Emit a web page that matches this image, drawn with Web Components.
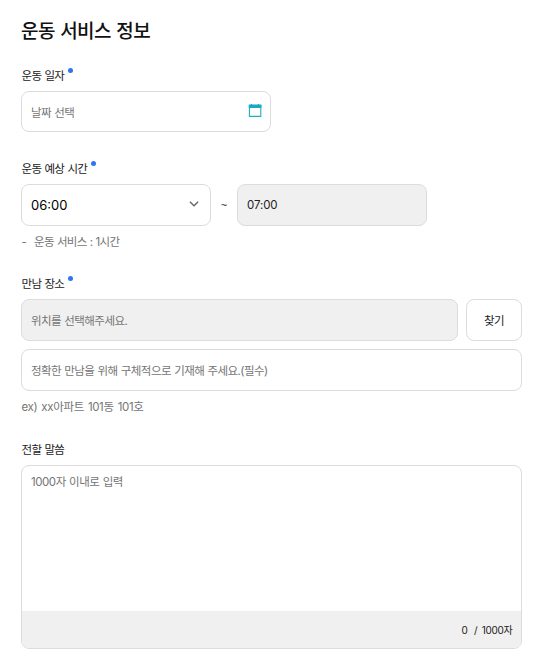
<!DOCTYPE html>
<html lang="ko">
<head>
<meta charset="utf-8">
<title>운동 서비스 정보</title>
<style>
  body {
    margin: 0;
    background: #fff;
    color: #222;
    font-family: Inter, "Noto Sans CJK KR", sans-serif;
    font-size: 11.5px;
    line-height: 18px;
    letter-spacing: -0.55px;
    word-spacing: 0.5px;
  }
</style>
</head>
<body>
<service-form>
  <form-field label="운동 일자" required style="height: 93px">
    <text-box style="width: 250px; height: 41px">날짜 선택<calendar-icon slot="icon"></calendar-icon></text-box>
  </form-field>

  <form-field label="운동 예상 시간" required style="height: 115px">
    <field-row>
      <text-box style="width: 190px; --color: #000; --size: 13px; --spacing: 0; --shift: 0">06:00<chevron-icon slot="icon"></chevron-icon></text-box>
      <range-mark>~</range-mark>
      <text-box disabled style="width: 190px; --color: #222; --spacing: -0.1px; --shift: 0">07:00</text-box>
    </field-row>
    <help-text mark="-" style="margin-top: 6px; letter-spacing: -0.65px">운동 서비스 : 1시간</help-text>
  </form-field>

  <form-field label="만남 장소" required style="height: 166px">
    <field-row style="gap: 8px">
      <text-box disabled style="flex: 1">위치를 선택해주세요.</text-box>
      <find-button>찾기</find-button>
    </field-row>
    <text-box style="margin-top: 8px">정확한 만남을 위해 구체적으로 기재해 주세요.(필수)</text-box>
    <help-text style="letter-spacing: -0.35px; word-spacing: 1.1px">ex) xx아파트 101동 101호</help-text>
  </form-field>

  <form-field label="전할 말씀">
    <message-box count="0" max="1000">1000자 이내로 입력</message-box>
  </form-field>
</service-form>

<script>
  class ServiceForm extends HTMLElement {
    constructor() {
      super();
      const shadow = this.attachShadow({mode: "open"});
      shadow.innerHTML = `
        <style>
          :host {
            display: block;
            box-sizing: border-box;
            width: 543px;
            padding: 16px 21px 0;
          }
          h1 {
            margin: 0 0 19px;
            height: 32px;
            font-size: 19px;
            line-height: 32px;
            font-weight: 500;
            letter-spacing: -0.6px;
            word-spacing: 1px;
            color: #111;
          }
        </style>
        <h1>운동 서비스 정보</h1>
        <slot></slot>
      `;
    }
  }

  class FormField extends HTMLElement {
    constructor() {
      super();
      const shadow = this.attachShadow({mode: "open"});
      shadow.innerHTML = `
        <style>
          :host {
            display: block;
          }
          .label {
            display: flex;
            gap: 4px;
            height: 24px;
            padding-left: 0.5px;
            letter-spacing: -0.65px;
          }
          .dot {
            width: 5px;
            height: 5px;
            margin-top: 1px;
            border-radius: 50%;
            background: #2f74f5;
          }
        </style>
        <div class="label">
          <span>${this.getAttribute("label")}</span>
          ${this.hasAttribute("required") ? '<i class="dot"></i>' : ""}
        </div>
        <slot></slot>
      `;
    }
  }

  class FieldRow extends HTMLElement {
    constructor() {
      super();
      const shadow = this.attachShadow({mode: "open"});
      shadow.innerHTML = `
        <style>
          :host {
            display: flex;
          }
        </style>
        <slot></slot>
      `;
    }
  }

  class TextBox extends HTMLElement {
    constructor() {
      super();
      const shadow = this.attachShadow({mode: "open"});
      shadow.innerHTML = `
        <style>
          :host {
            display: flex;
            align-items: center;
            justify-content: space-between;
            box-sizing: border-box;
            height: 42px;
            padding: 0 9px;
            border: 1px solid #dcdcdc;
            border-radius: 8px;
            background: #fff;
            color: var(--color, #757575);
            font-size: var(--size, 11.5px);
            letter-spacing: var(--spacing, -0.55px);
          }
          :host([disabled]) {
            background: #f0f0f0;
          }
          span {
            padding-top: var(--shift, 2px);
          }
        </style>
        <span><slot></slot></span>
        <slot name="icon"></slot>
      `;
    }
  }

  class RangeMark extends HTMLElement {
    constructor() {
      super();
      const shadow = this.attachShadow({mode: "open"});
      shadow.innerHTML = `
        <style>
          :host {
            width: 26px;
            font-family: "Liberation Sans", sans-serif;
            font-size: 11px;
            line-height: 43px;
            letter-spacing: 0;
            text-align: center;
          }
        </style>
        <slot></slot>
      `;
    }
  }

  class HelpText extends HTMLElement {
    constructor() {
      super();
      const shadow = this.attachShadow({mode: "open"});
      shadow.innerHTML = `
        <style>
          :host {
            display: flex;
            margin-top: 7px;
            padding-left: 0.5px;
            color: #757575;
          }
          .mark {
            width: 12.5px;
          }
        </style>
        ${this.hasAttribute("mark") ? `<span class="mark">${this.getAttribute("mark")}</span>` : ""}
        <span><slot></slot></span>
      `;
    }
  }

  class FindButton extends HTMLElement {
    constructor() {
      super();
      const shadow = this.attachShadow({mode: "open"});
      shadow.innerHTML = `
        <style>
          button {
            display: block;
            width: 56px;
            height: 42px;
            padding: 1px 0 0;
            border: 1px solid #dcdcdc;
            border-radius: 8px;
            background: #fff;
            color: #222;
            font: inherit;
            letter-spacing: -0.5px;
          }
        </style>
        <button type="button"><slot></slot></button>
      `;
    }
  }

  class MessageBox extends HTMLElement {
    constructor() {
      super();
      const shadow = this.attachShadow({mode: "open"});
      shadow.innerHTML = `
        <style>
          :host {
            display: flex;
            flex-direction: column;
            box-sizing: border-box;
            height: 184px;
            border: 1px solid #dcdcdc;
            border-radius: 8px;
            overflow: hidden;
          }
          .text {
            flex: 1;
            padding: 7px 9px;
            color: #757575;
            letter-spacing: -0.45px;
          }
          .count {
            display: flex;
            justify-content: flex-end;
            height: 37px;
            padding-right: 8.5px;
            background: #f0f0f0;
            font-size: 10px;
            line-height: 39px;
            letter-spacing: -0.3px;
          }
          .count span + span {
            margin-left: 6.5px;
          }
          .count span:last-child {
            margin-left: 4.5px;
          }
        </style>
        <div class="text"><slot></slot></div>
        <div class="count">
          <span>${this.getAttribute("count")}</span>
          <span>/</span>
          <span>${this.getAttribute("max")}자</span>
        </div>
      `;
    }
  }

  class CalendarIcon extends HTMLElement {
    constructor() {
      super();
      const shadow = this.attachShadow({mode: "open"});
      shadow.innerHTML = `
        <style>
          :host, svg {
            display: block;
          }
          svg {
            margin: 0 -1px 2px 0;
          }
        </style>
        <svg width="14" height="13" viewBox="0 0 14 13">
          <path d="M0.8 0.5h12.6v3.5H0.8z" fill="#16a8c4"/>
          <path d="M1.4 1v11.4h11.4V1" fill="none" stroke="#22adc7" stroke-width="1.1"/>
          <path d="M3.5 0v1M10.5 0v1" stroke="#16a8c4"/>
        </svg>
      `;
    }
  }

  class ChevronIcon extends HTMLElement {
    constructor() {
      super();
      const shadow = this.attachShadow({mode: "open"});
      shadow.innerHTML = `
        <style>
          :host, svg {
            display: block;
          }
          svg {
            margin: 0 2px 2px 0;
          }
        </style>
        <svg width="10" height="6" viewBox="0 0 10 6">
          <path d="M0.9 0.7l4.1 4.1 4.1-4.1" fill="none" stroke="#666" stroke-width="1.3"/>
        </svg>
      `;
    }
  }

  customElements.define("service-form", ServiceForm);
  customElements.define("form-field", FormField);
  customElements.define("field-row", FieldRow);
  customElements.define("text-box", TextBox);
  customElements.define("range-mark", RangeMark);
  customElements.define("help-text", HelpText);
  customElements.define("find-button", FindButton);
  customElements.define("message-box", MessageBox);
  customElements.define("calendar-icon", CalendarIcon);
  customElements.define("chevron-icon", ChevronIcon);
</script>
</body>
</html>
